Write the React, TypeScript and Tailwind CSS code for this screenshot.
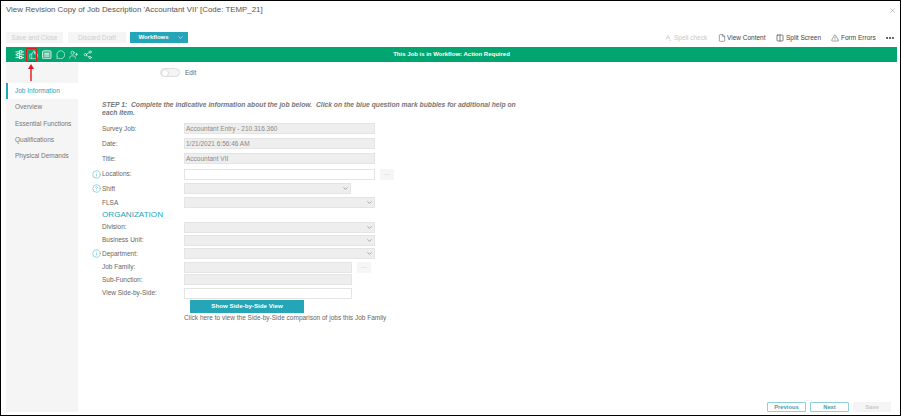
import React from "react";
import { ChevronDown, X, File, Columns2, TriangleAlert, MoreHorizontal, ThumbsUp, MessageCircle, UserPlus, Share2, Info, CircleHelp, SpellCheck } from "lucide-react";

const inputBase = "h-[11px] border border-[#e4e4e4] text-[6.5px] leading-[9px] pl-[1px] text-[#8a8a8a]";

function Field({ label, value, width = "w-[191px]", height = "h-[14px]", kind = "gray", icon, dots }: {
  label: string;
  value?: string;
  width?: string;
  height?: string;
  kind?: "gray" | "white" | "select";
  icon?: "info" | "help";
  dots?: boolean;
}) {
  return (
    <div className={`flex items-center ${height}`}>
      <div className="w-[12px] flex justify-end -ml-[1px] mr-[1px]">
        {icon === "info" && <Info className="w-[9px] h-[9px] text-[#4db8c8]" strokeWidth={1.5} />}
        {icon === "help" && <CircleHelp className="w-[9px] h-[9px] text-[#4db8c8]" strokeWidth={1.5} />}
      </div>
      <div className="w-[82px] text-[6.5px] text-[#666]">{label}</div>
      <div className={`${width} ${inputBase} ${kind === "white" ? "bg-white" : "bg-[#eeeeee]"} flex items-center justify-between`}>
        <span>{value}</span>
        {kind === "select" && <ChevronDown className="w-[7px] h-[7px] text-[#777] mr-[1px]" />}
      </div>
      {dots && <div className="ml-[5px] w-[14px] h-[11px] bg-[#f6f6f6] text-[6px] leading-[9px] text-center text-[#aaa] tracking-wide">...</div>}
    </div>
  );
}

export default function App() {
  return (
    <div className="w-[901px] h-[416px] bg-white border-t border-r border-b border-black shadow-[inset_1px_0_0_#000] relative overflow-hidden text-[#444]" style={{ fontFamily: '"Liberation Sans", sans-serif' }}>
      {/* title */}
      <div className="flex justify-between h-[31px] pl-[6px] pr-[4px] pt-[2px]">
        <div className="text-[7.9px] leading-[14px] text-[#555]">View Revision Copy of Job Description 'Accountant VII' [Code: TEMP_21]</div>
        <X className="w-[7px] h-[7px] mt-[4px] text-[#999]" />
      </div>

      {/* toolbar */}
      <div className="flex items-center h-[11px] pl-[6px] pr-[5px] text-[6.5px] whitespace-nowrap">
        <div className="w-[57px] h-[11px] bg-[#f5f5f5] text-[#cfcfcf] flex items-center justify-center">Save and Close</div>
        <div className="ml-[5px] w-[58px] h-[11px] bg-[#f5f5f5] text-[#cfcfcf] flex items-center justify-center">Discard Draft</div>
        <div className="ml-[4px] w-[58px] h-[11px] bg-[#24a5b8] text-white text-[6px] font-semibold flex items-center">
          <span className="w-[47px] text-center">Workflows</span>
          <ChevronDown className="w-[7px] h-[7px]" />
        </div>
        <div className="ml-auto flex items-center text-[6.5px] text-[#444]">
          <SpellCheck className="w-[8px] h-[8px] text-[#ccc] mr-[2px]" />
          <span className="w-[32px] text-[#c8c8c8]">Spell check</span>
          <File className="w-[8px] h-[8px] ml-[12px] mr-[1px]" strokeWidth={1.5} />
          <span className="w-[39px]">View Content</span>
          <Columns2 className="w-[8px] h-[8px] ml-[10px] mr-[2px]" strokeWidth={2} />
          <span className="w-[34px]">Split Screen</span>
          <TriangleAlert className="w-[8px] h-[8px] ml-[11px] mr-[2px]" strokeWidth={1.5} />
          <span className="w-[34px]">Form Errors</span>
          <MoreHorizontal className="w-[10px] h-[10px] ml-[10px] text-[#333]" strokeWidth={3} />
        </div>
      </div>

      {/* green bar */}
      <div className="relative flex items-center h-[15px] ml-[6px] mr-[3px] mt-[4px] bg-[#00a56f] text-white pl-[9px] gap-[4px]">
        <svg className="w-[9.5px] h-[9.5px]" viewBox="0 0 10 10" fill="none" stroke="currentColor" strokeWidth="0.9">
          <path d="M0.5 2h4M7.5 2h2M0.5 5h1.5M5 5h4.5M0.5 8h4M7.5 8h2" />
          <rect x="4.6" y="0.8" width="2.6" height="2.4" />
          <rect x="2.2" y="3.8" width="2.6" height="2.4" />
          <rect x="4.6" y="6.8" width="2.6" height="2.4" />
        </svg>
        <ThumbsUp className="w-[9.5px] h-[9.5px]" strokeWidth={1.5} />
        <svg className="w-[9.5px] h-[9.5px]" viewBox="0 0 10 10" fill="none" stroke="currentColor" strokeWidth="0.8">
          <rect x="0.5" y="0.8" width="9" height="8.4" rx="1.2" fill="#ffffff" fillOpacity="0.25" />
          <path d="M2.5 3.5h5M2.5 5h5M2.5 6.5h5" />
        </svg>
        <MessageCircle className="w-[9.5px] h-[9.5px]" strokeWidth={1.5} />
        <UserPlus className="w-[9.5px] h-[9.5px]" strokeWidth={1.5} />
        <Share2 className="w-[9.5px] h-[9.5px]" strokeWidth={1.5} />
        <div className="absolute inset-0 flex items-center justify-center text-[6px] font-bold pointer-events-none">This Job is in Workflow: Action Required</div>
      </div>

      <div className="flex h-[349px] mt-[1px]">
        {/* sidebar */}
        <div className="w-[72px] ml-[6px] flex flex-col text-[6.5px] text-[#777]">
          <div className="h-[20px] bg-[#f5f5f5]" />
          <div className="h-[16px] bg-white border-l-2 border-[#24a5b8] pl-[7px] flex items-center text-[#24a5b8] font-medium">Job Information</div>
          <div className="flex-1 bg-[#f5f5f5] pl-[9px]">
            <div className="h-[16.3px] flex items-center">Overview</div>
            <div className="h-[16.3px] flex items-center">Essential Functions</div>
            <div className="h-[16.3px] flex items-center">Qualifications</div>
            <div className="h-[16.3px] flex items-center">Physical Demands</div>
          </div>
        </div>

        {/* main */}
        <div className="flex-1 flex flex-col relative">
          <div className="flex items-center h-[11px] mt-[4px] ml-[82px]">
            <div className="w-[20px] h-[9px] rounded-full border border-[#ddd] bg-[#f4f4f4] relative">
              <div className="w-[8px] h-[8px] rounded-full bg-white border border-[#ddd] absolute left-0 top-0" />
            </div>
            <span className="ml-[5px] text-[6.5px] text-[#666]">Edit</span>
          </div>

          <div className="ml-[24px] mt-[23px] w-[418px] text-[6.74px] leading-[8px] italic font-bold text-[#777]">
            STEP 1:&nbsp; Complete the indicative information about the job below.&nbsp; Click on the blue question mark bubbles for additional help on each item.
          </div>

          <div className="ml-[12px] mt-[4px] flex flex-col">
            <Field label="Survey Job:" value="Accountant Entry - 210.316.360" height="h-[15px]" />
            <Field label="Date:" value="1/21/2021 6:56:46 AM" height="h-[15px]" />
            <Field label="Title:" value="Accountant VII" height="h-[15.5px]" />
            <Field label="Locations:" kind="white" icon="info" dots height="h-[15px]" />
            <Field label="Shift" kind="select" width="w-[167px]" icon="help" />
            <Field label="FLSA" kind="select" />
            <div className="ml-[12px] h-[12px] -mb-[1px] flex items-center text-[8.1px] text-[#24a5b8]">ORGANIZATION</div>
            <Field label="Division:" kind="select" height="h-[13px]" />
            <Field label="Business Unit:" kind="select" height="h-[13px]" />
            <Field label="Department:" kind="select" icon="info" />
            <Field label="Job Family:" width="w-[168px]" dots height="h-[13px]" />
            <Field label="Sub-Function:" width="w-[168px]" height="h-[12px]" />
            <Field label="View Side-by-Side:" kind="white" width="w-[168px]" height="h-[15px]" />
            <div className="ml-[100px] -mt-[1px] w-[114px] h-[13px] bg-[#24a5b8] text-white text-[6.2px] font-semibold flex items-center justify-center">Show Side-by-Side View</div>
            <div className="ml-[94px] text-[6.5px] leading-[9px] text-[#666]">Click here to view the Side-by-Side comparison of jobs this Job Family</div>
          </div>

          <div className="absolute right-[9px] bottom-0 flex gap-[4px] text-[5.8px] font-semibold">
            <div className="w-[39px] h-[10px] border border-[#8fd0da] rounded-[1px] text-[#3f9fb0] flex items-center justify-center">Previous</div>
            <div className="w-[39px] h-[10px] border border-[#8fd0da] rounded-[1px] text-[#3f9fb0] flex items-center justify-center">Next</div>
            <div className="w-[38px] h-[10px] bg-[#f5f5f5] text-[#c8c8c8] flex items-center justify-center">Save</div>
          </div>
        </div>
      </div>

      {/* red callout */}
      <div className="absolute left-[26px] top-[47px] w-[11px] h-[14px] border-[1.5px] border-[#e8141c] rounded-[1px]" />
      <svg className="absolute left-[27px] top-[62px]" width="8" height="19" viewBox="0 0 8 19">
        <path d="M4 18V5" stroke="#e8141c" strokeWidth="1.4" />
        <path d="M1 6l3-5 3 5z" fill="#e8141c" />
      </svg>
    </div>
  );
}
